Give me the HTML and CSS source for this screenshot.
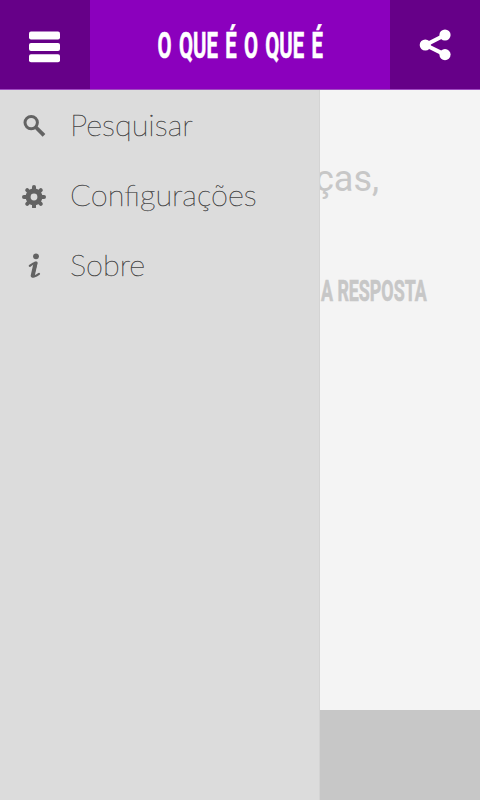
FILE: index.html
```html
<!DOCTYPE html>
<html lang="pt-BR">
<head>
    <meta charset="UTF-8">
    <meta name="viewport" content="width=device-width, initial-scale=1.0">
    <title>O que é o que é</title>
    <link rel="stylesheet" href="styles.css">
</head>
<body>
    <header class="top-bar">
        <button class="bar-button" aria-label="Menu">
            <svg width="90" height="90" viewBox="0 0 90 90">
                <rect x="29" y="31.5" width="31" height="8" rx="2"/>
                <rect x="29" y="43" width="31" height="8" rx="2"/>
                <rect x="29" y="54.3" width="31" height="8" rx="2"/>
            </svg>
        </button>
        <h1 class="title"><span>O QUE É O QUE É</span></h1>
        <button class="bar-button" aria-label="Compartilhar">
            <svg width="90" height="90" viewBox="0 0 90 90">
                <path d="M55 35 L35.5 45 L55 54.6" fill="none" stroke="#fff" stroke-width="4"/>
                <circle cx="35.3" cy="45" r="5.6"/>
                <circle cx="55" cy="35" r="5.6"/>
                <circle cx="55" cy="54.6" r="5.6"/>
            </svg>
        </button>
    </header>

    <main class="page">
        <nav class="drawer">
            <a class="drawer-item">
                <svg width="26" height="26" viewBox="0 0 26 26">
                    <circle cx="10.2" cy="10.6" r="6.2" fill="none" stroke="#636363" stroke-width="3"/>
                    <path d="M14.6 15 L23 23.4" stroke="#636363" stroke-width="3.8"/>
                </svg>
                <span>Pesquisar</span>
            </a>
            <a class="drawer-item">
                <svg width="26" height="26" viewBox="0 0 26 26">
                    <circle cx="13" cy="15" r="5.9" fill="none" stroke="#636363" stroke-width="5"/>
                    <g stroke="#636363" stroke-width="4" stroke-linecap="round">
                        <path d="M13 5v3M13 22v3M3 15h3M20 15h3"/>
                        <path d="M6.2 8.2l2 2M17.8 19.8l2 2M6.2 21.8l2-2M17.8 10.2l2-2"/>
                    </g>
                </svg>
                <span>Configurações</span>
            </a>
            <a class="drawer-item">
                <svg width="26" height="26" viewBox="0 0 26 26">
                    <circle cx="15" cy="4.3" r="2.9" fill="#636363"/>
                    <path d="M8.8 13.8 Q12 11.2 15.4 10.5 C14.8 14.4 12.4 20.6 12.3 23.2 Q12.3 26 18 21.9" fill="none" stroke="#636363" stroke-width="2.2" stroke-linecap="round" stroke-linejoin="round"/>
                    <path d="M14.4 11.6 L11.7 23.8" stroke="#636363" stroke-width="4" stroke-linecap="round"/>
                </svg>
                <span>Sobre</span>
            </a>
        </nav>
        <section class="riddle">
            <p class="question">ças,</p>
            <p class="answer"><span>A RESPOSTA</span></p>
        </section>
        <footer class="ad-bar"></footer>
    </main>
</body>
</html>
```
FILE: styles.css
```css
* {
    box-sizing: border-box;
}

body {
    margin: 0;
    height: 800px;
    display: flex;
    flex-direction: column;
    background: #f4f4f4;
    font-family: Roboto, sans-serif;
    overflow: hidden;
}

.top-bar {
    height: 90px;
    display: flex;
    flex: none;
    background: #8b00bd;
    box-shadow: inset 0 -1px #a04bc2;
}

.bar-button {
    width: 90px;
    height: 89px;
    padding: 0;
    border: none;
    background: #660088;
    fill: #fff;
}

.bar-button svg {
    display: block;
}

.title {
    flex: 1;
    margin: 0;
    display: flex;
    justify-content: center;
    font-size: 36px;
    font-weight: 700;
    line-height: 92px;
    color: #fff;
    white-space: nowrap;
}

.title span {
    word-spacing: 4px;
    -webkit-text-stroke: 0.6px #fff;
    transform: scaleX(0.565);
}

.page {
    flex: 1;
    display: flex;
    flex-direction: column;
    position: relative;
}

.drawer {
    position: absolute;
    top: 0;
    bottom: 0;
    left: 0;
    width: 320px;
    background: #dcdcdc;
    border-right: 1px solid #d4d4d4;
}

.drawer-item {
    display: flex;
    align-items: center;
    gap: 23px;
    height: 70px;
    padding-left: 21px;
    font-family: Lato, sans-serif;
    font-size: 30.8px;
    font-weight: 200;
    line-height: 36px;
    color: #444;
}

.drawer-item span {
    padding-bottom: 1px;
    -webkit-text-stroke: 0.4px #444;
}

.riddle {
    flex: 1;
    padding-left: 315px;
    color: #c7c7c7;
}

.question {
    margin: 68px 0 0;
    font-size: 36px;
    line-height: 42px;
}

.answer {
    margin: 71px 0 0;
    padding-left: 6px;
    font-size: 29px;
    font-weight: 700;
    line-height: 40px;
    white-space: nowrap;
}

.answer span {
    display: inline-block;
    -webkit-text-stroke: 0.6px #c7c7c7;
    transform: scaleX(0.615);
    transform-origin: left;
}

.ad-bar {
    height: 90px;
    background: #c7c7c7;
}
```
